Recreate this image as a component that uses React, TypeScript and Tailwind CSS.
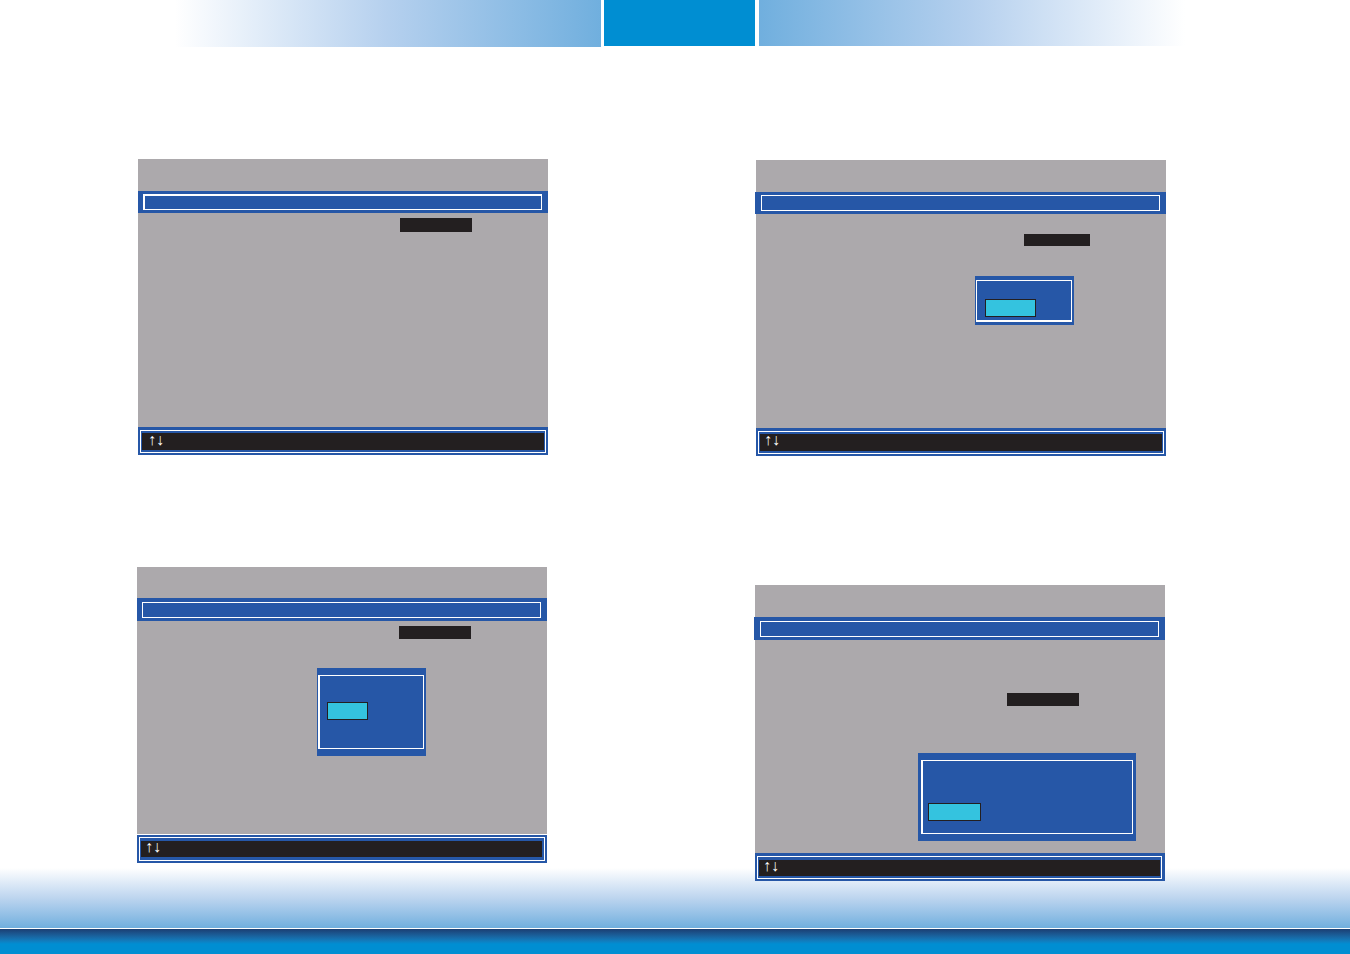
import React from "react";
import clsx from "clsx";

const Panel = ({
    className,
    titleClass = "h-8",
    barClass,
    frameClass,
    bodyClass,
    keysClass,
    keysFrameClass,
    arrowsClass,
    children,
}: {
    className?: string;
    titleClass?: string;
    barClass: string;
    frameClass: string;
    bodyClass: string;
    keysClass: string;
    keysFrameClass: string;
    arrowsClass: string;
    children: React.ReactNode;
}) => (
    <section className={clsx("flex flex-col bg-[#aca9ac]", className)}>
        <div className={titleClass} />
        <div className={clsx("flex flex-col bg-[#2657a7]", barClass)}>
            <div className={clsx("flex-1 border-white", frameClass)} />
        </div>
        <div className={clsx("relative flex flex-col items-end", bodyClass)}>{children}</div>
        <footer className={clsx("flex h-7 flex-col bg-[#2657a7] pb-[2px] pl-[2px]", keysClass)}>
            <div className={clsx("flex flex-1 flex-col border border-white px-px", keysFrameClass)}>
                <div
                    className={clsx(
                        "flex-1 bg-[#231f20] font-['Liberation_Serif',serif] text-base text-white",
                        arrowsClass
                    )}
                >
                    ↑↓
                </div>
            </div>
        </footer>
    </section>
);

const Popup = ({
    className,
    frameClass,
    optionClass,
}: {
    className: string;
    frameClass: string;
    optionClass: string;
}) => (
    <div className={clsx("absolute flex flex-col bg-[#2657a7]", className)}>
        <div className={clsx("flex flex-1 flex-col items-start border-white", frameClass)}>
            <button
                type="button"
                aria-label="Selected option"
                className={clsx("h-[18px] border border-[#231f20] bg-[#34c3df]", optionClass)}
            />
        </div>
    </div>
);

export default function App() {
    return (
        <div className="flex min-h-screen flex-col bg-white font-['Liberation_Sans',sans-serif]">
            <header className="flex h-[47px] items-start pr-[165px] pl-[175px]">
                <div className="h-[47px] flex-1 bg-linear-to-l from-[#70afde] via-[#b5d0ee] to-white" />
                <div className="mr-1 ml-[3px] h-[46px] w-[151px] bg-[#008ed2]" />
                <div className="h-[46px] flex-1 bg-linear-to-r from-[#70afde] via-[#b5d0ee] to-white" />
            </header>

            <main className="relative z-10 flex-1 pt-28">
                <div className="grid grid-cols-2 items-start gap-x-[208px] pr-[184px] pl-[138px]">
                    <Panel
                        barClass="h-[22px] pt-[3px] pr-[6px] pb-[3px] pl-[5px]"
                        frameClass="border border-t-2 border-l-2"
                        bodyClass="h-[214px] pt-[5px] pr-[76px]"
                        keysClass="pt-[3px] pr-[2px]"
                        keysFrameClass="pt-[2px] pb-[2px]"
                        arrowsClass="pl-[6px] leading-[14px]"
                    >
                        <div className="h-[14px] w-[72px] bg-[#231f20]" />
                    </Panel>

                    <Panel
                        className="mt-px"
                        barClass="-ml-px h-[22px] pt-[3px] pr-[6px] pb-[3px] pl-[6px]"
                        frameClass="border"
                        bodyClass="h-[214px] pt-5 pr-[76px]"
                        keysClass="pt-[3px] pr-[2px]"
                        keysFrameClass="pt-[2px] pb-[2px]"
                        arrowsClass="pl-[4px] leading-3"
                    >
                        <div className="h-3 w-[66px] bg-[#231f20]" />
                        <Popup
                            className="top-[62px] right-[92px] h-[49px] w-[99px] pt-1 pr-[2px] pb-[3px] pl-px"
                            frameClass="border border-b-2 pt-[18px] pl-2"
                            optionClass="w-[51px]"
                        />
                    </Panel>
                </div>

                <div className="mt-[111px] grid grid-cols-2 items-start gap-x-[208px] pr-[185px] pl-[137px]">
                    <Panel
                        titleClass="h-[31px]"
                        barClass="h-[23px] pt-1 pr-[6px] pb-[3px] pl-[5px]"
                        frameClass="border"
                        bodyClass="h-[214px] border-b border-white pt-[5px] pr-[76px]"
                        keysClass="pt-[2px] pr-[2px]"
                        keysFrameClass="pt-[3px] pr-[2px] pb-[3px]"
                        arrowsClass="pl-[4px] leading-3"
                    >
                        <div className="h-[13px] w-[72px] bg-[#231f20]" />
                        <Popup
                            className="top-[47px] right-[121px] h-[88px] w-[109px] pt-[7px] pr-[2px] pb-[7px] pl-px"
                            frameClass="border border-l-2 pt-[26px] pl-[7px]"
                            optionClass="w-[41px]"
                        />
                    </Panel>

                    <Panel
                        className="mt-[18px]"
                        barClass="-ml-px h-[23px] pt-1 pr-[6px] pb-[3px] pl-[6px]"
                        frameClass="border"
                        bodyClass="h-[213px] pt-[53px] pr-[86px]"
                        keysClass="pt-[3px] pr-[3px]"
                        keysFrameClass="pt-[3px] pb-[2px]"
                        arrowsClass="pl-[4px] leading-3"
                    >
                        <div className="h-[13px] w-[72px] bg-[#231f20]" />
                        <Popup
                            className="top-[113px] right-[29px] h-[88px] w-[218px] pt-[7px] pr-[3px] pb-[7px] pl-[3px]"
                            frameClass="border border-l-2 pt-[42px] pl-[5px]"
                            optionClass="w-[53px]"
                        />
                    </Panel>
                </div>
            </main>

            <footer className="-mt-[13px]">
                <div className="h-[60px] bg-linear-to-b from-white via-[#bdd5ef] to-[#70afde]" />
                <div className="mt-px h-[25px] bg-linear-to-b from-[#1b3f73] to-[#008ed2] to-60%" />
            </footer>
        </div>
    );
}
